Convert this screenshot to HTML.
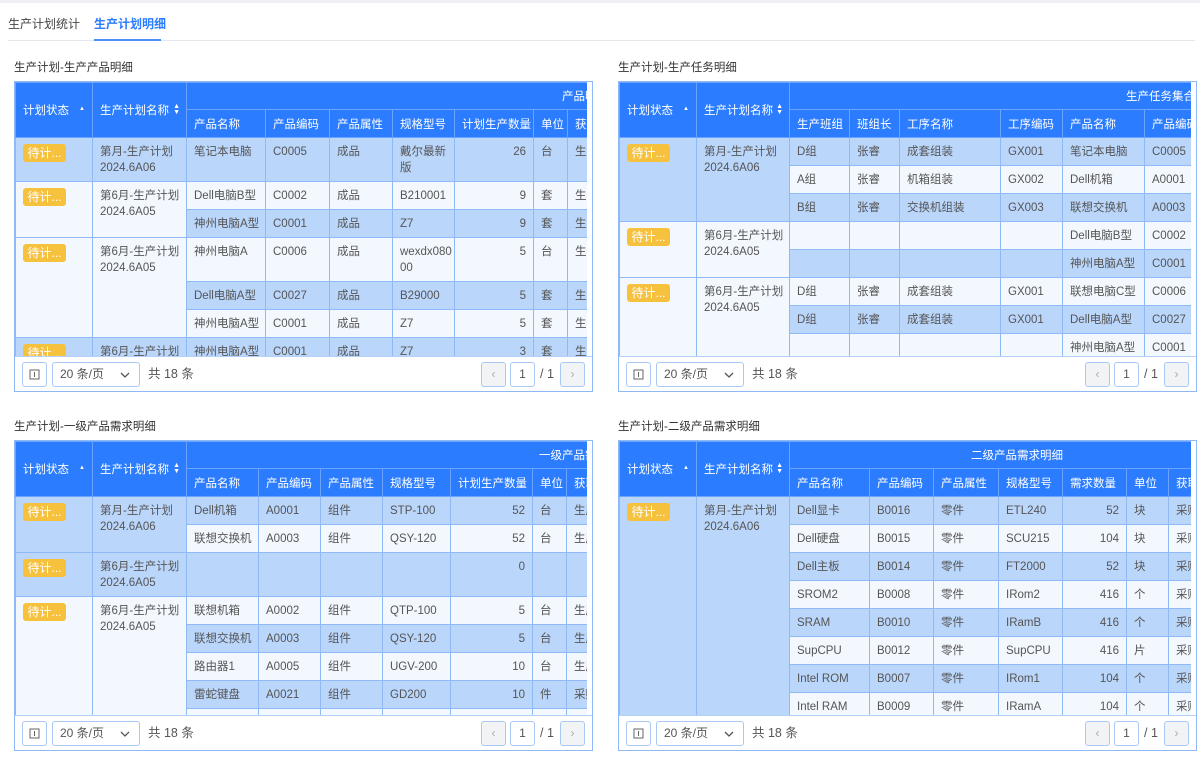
<!DOCTYPE html>
<html><head><meta charset="utf-8"><style>
*{box-sizing:border-box;margin:0;padding:0}
body{width:1200px;height:773px;background:#fff;font-family:"Liberation Sans","Noto Sans CJK SC",sans-serif;position:relative;overflow:hidden;color:#555;font-size:11.5px}
.top{position:absolute;left:0;top:0;width:1200px;height:3px;background:#eef0f4}
.tab{position:absolute;top:15px;font-size:12px;color:#444}
.tab.a{color:#2b7cff;font-weight:bold}
.tline{position:absolute;left:8px;top:40px;width:1187px;height:1px;background:#e4e7ec}
.tul{position:absolute;left:94px;top:39px;width:67px;height:2px;background:#4b8ff7}
.ttl{position:absolute;font-size:11.5px;color:#333}
.panel{position:absolute;width:579px;height:311px;border:1px solid #8fb9f5;background:#fff}
.clip{position:absolute;left:0;top:0;width:572px;height:275px;overflow:hidden;background:#f3f8fe}
.foot{position:absolute;left:0;top:274px;width:577px;height:35px;border-top:1px solid #b5d1f9;background:#fff}
table{border-collapse:collapse;table-layout:fixed}
th{background:#2b7cff;color:#fff;font-weight:normal;text-align:left;padding:0 7px;border:1px solid #6aa4ff;white-space:nowrap;overflow:hidden;font-size:11.5px;position:relative;vertical-align:middle}
td{border:1px solid #8fbaf6;vertical-align:top;padding:6px 7px 0 7px;line-height:16px;white-space:nowrap;overflow:hidden;color:#555;font-size:11.5px}
.b{background:#bad6fb}.l{background:#f3f8fe}
.r{text-align:right}
.bd{display:inline-block;background:#f6c23e;color:#fff;border-radius:3px;width:43px;height:18px;line-height:18px;font-size:12px;text-align:center}
.s1{position:absolute;right:7px;top:50%;margin-top:-6px;font-size:6px;line-height:10px}
.s2{position:absolute;right:6px;top:50%;margin-top:-6px;font-size:7px;line-height:6px;text-align:center}
.ib{position:absolute;top:5px;height:25px;border:1px solid #a9c8f5;border-radius:3px;background:#fff;text-align:center;line-height:23px;color:#555;font-size:12px}
.g{background:#f2f3f5;color:#aaa}
.ft{position:absolute;top:5px;line-height:25px;color:#555;font-size:12.5px}
</style></head><body>
<div class="top"></div>
<div class="tab" style="left:8px">生产计划统计</div>
<div class="tab a" style="left:94px">生产计划明细</div>
<div class="tline"></div><div class="tul"></div>

<div class="ttl" style="left:14px;top:59px">生产计划-生产产品明细</div>
<div class="ttl" style="left:618px;top:59px">生产计划-生产任务明细</div>
<div class="ttl" style="left:14px;top:418px">生产计划-一级产品需求明细</div>
<div class="ttl" style="left:618px;top:418px">生产计划-二级产品需求明细</div>

<!-- Panel 1 -->
<div class="panel" style="left:14px;top:81px"><div class="clip">
<table style="width:612px">
<colgroup><col style="width:77px"><col style="width:94px"><col style="width:79px"><col style="width:64px"><col style="width:63px"><col style="width:62px"><col style="width:79px"><col style="width:34px"><col style="width:60px"></colgroup>
<tr style="height:27px"><th rowspan="2">计划状态<span class="s1">▲</span></th><th rowspan="2">生产计划名称<span class="s2">▲<br>▼</span></th><th colspan="7" style="padding-left:375px">产品明细</th></tr>
<tr style="height:28px"><th>产品名称</th><th>产品编码</th><th>产品属性</th><th>规格型号</th><th>计划生产数量</th><th>单位</th><th>获取方式</th></tr>
<tr style="height:44px"><td class="b"><span class="bd">待计...</span></td><td class="b">第月-生产计划<br>2024.6A06</td><td class="b">笔记本电脑</td><td class="b">C0005</td><td class="b">成品</td><td class="b">戴尔最新<br>版</td><td class="b r">26</td><td class="b">台</td><td class="b">生产</td></tr>
<tr style="height:28px"><td class="l" rowspan="2"><span class="bd">待计...</span></td><td class="l" rowspan="2">第6月-生产计划<br>2024.6A05</td><td class="l">Dell电脑B型</td><td class="l">C0002</td><td class="l">成品</td><td class="l">B210001</td><td class="l r">9</td><td class="l">套</td><td class="l">生产</td></tr>
<tr style="height:28px"><td class="b">神州电脑A型</td><td class="b">C0001</td><td class="b">成品</td><td class="b">Z7</td><td class="b r">9</td><td class="b">套</td><td class="b">生产</td></tr>
<tr style="height:44px"><td class="l" rowspan="3"><span class="bd">待计...</span></td><td class="l" rowspan="3">第6月-生产计划<br>2024.6A05</td><td class="l">神州电脑A</td><td class="l">C0006</td><td class="l">成品</td><td class="l">wexdx080<br>00</td><td class="l r">5</td><td class="l">台</td><td class="l">生产</td></tr>
<tr style="height:28px"><td class="b">Dell电脑A型</td><td class="b">C0027</td><td class="b">成品</td><td class="b">B29000</td><td class="b r">5</td><td class="b">套</td><td class="b">生产</td></tr>
<tr style="height:28px"><td class="l">神州电脑A型</td><td class="l">C0001</td><td class="l">成品</td><td class="l">Z7</td><td class="l r">5</td><td class="l">套</td><td class="l">生产</td></tr>
<tr style="height:28px"><td class="b"><span class="bd">待计...</span></td><td class="b">第6月-生产计划</td><td class="b">神州电脑A型</td><td class="b">C0001</td><td class="b">成品</td><td class="b">Z7</td><td class="b r">3</td><td class="b">套</td><td class="b">生产</td></tr>
</table></div>
<div class="foot">
<div class="ib" style="left:7px;width:25px"><svg width="11" height="11" viewBox="0 0 11 11" style="margin-top:6px"><rect x="1" y="1" width="9" height="9" fill="none" stroke="#666"/><line x1="5.5" y1="3" x2="5.5" y2="8" stroke="#666"/></svg></div>
<div class="ib" style="left:37px;width:88px;text-align:left;padding-left:7px">20 条/页<svg style="position:absolute;right:9px;top:9px" width="10" height="6" viewBox="0 0 10 6"><path d="M1 1L5 5L9 1" fill="none" stroke="#555" stroke-width="1.3"/></svg></div>
<div class="ft" style="left:133px">共 18 条</div>
<div class="ib g" style="left:466px;width:25px">‹</div>
<div class="ib" style="left:495px;width:25px">1</div>
<div class="ft" style="left:525px">/ 1</div>
<div class="ib g" style="left:545px;width:25px">›</div>
</div></div>

<!-- Panel 2 -->
<div class="panel" style="left:618px;top:81px"><div class="clip">
<table style="width:585px">
<colgroup><col style="width:77px"><col style="width:93px"><col style="width:60px"><col style="width:50px"><col style="width:101px"><col style="width:62px"><col style="width:82px"><col style="width:60px"></colgroup>
<tr style="height:27px"><th rowspan="2">计划状态<span class="s1">▲</span></th><th rowspan="2">生产计划名称<span class="s2">▲<br>▼</span></th><th colspan="6" style="padding-left:336px">生产任务集合</th></tr>
<tr style="height:28px"><th>生产班组</th><th>班组长</th><th>工序名称</th><th>工序编码</th><th>产品名称</th><th>产品编码</th></tr>
<tr style="height:28px"><td class="b" rowspan="3"><span class="bd">待计...</span></td><td class="b" rowspan="3">第月-生产计划<br>2024.6A06</td><td class="b">D组</td><td class="b">张睿</td><td class="b">成套组装</td><td class="b">GX001</td><td class="b">笔记本电脑</td><td class="b">C0005</td></tr>
<tr style="height:28px"><td class="l">A组</td><td class="l">张睿</td><td class="l">机箱组装</td><td class="l">GX002</td><td class="l">Dell机箱</td><td class="l">A0001</td></tr>
<tr style="height:28px"><td class="b">B组</td><td class="b">张睿</td><td class="b">交换机组装</td><td class="b">GX003</td><td class="b">联想交换机</td><td class="b">A0003</td></tr>
<tr style="height:28px"><td class="l" rowspan="2"><span class="bd">待计...</span></td><td class="l" rowspan="2">第6月-生产计划<br>2024.6A05</td><td class="l"></td><td class="l"></td><td class="l"></td><td class="l"></td><td class="l">Dell电脑B型</td><td class="l">C0002</td></tr>
<tr style="height:28px"><td class="b"></td><td class="b"></td><td class="b"></td><td class="b"></td><td class="b">神州电脑A型</td><td class="b">C0001</td></tr>
<tr style="height:28px"><td class="l" rowspan="3"><span class="bd">待计...</span></td><td class="l" rowspan="3">第6月-生产计划<br>2024.6A05</td><td class="l">D组</td><td class="l">张睿</td><td class="l">成套组装</td><td class="l">GX001</td><td class="l">联想电脑C型</td><td class="l">C0006</td></tr>
<tr style="height:28px"><td class="b">D组</td><td class="b">张睿</td><td class="b">成套组装</td><td class="b">GX001</td><td class="b">Dell电脑A型</td><td class="b">C0027</td></tr>
<tr style="height:28px"><td class="l"></td><td class="l"></td><td class="l"></td><td class="l"></td><td class="l">神州电脑A型</td><td class="l">C0001</td></tr>
</table></div>
<div class="foot">
<div class="ib" style="left:7px;width:25px"><svg width="11" height="11" viewBox="0 0 11 11" style="margin-top:6px"><rect x="1" y="1" width="9" height="9" fill="none" stroke="#666"/><line x1="5.5" y1="3" x2="5.5" y2="8" stroke="#666"/></svg></div>
<div class="ib" style="left:37px;width:88px;text-align:left;padding-left:7px">20 条/页<svg style="position:absolute;right:9px;top:9px" width="10" height="6" viewBox="0 0 10 6"><path d="M1 1L5 5L9 1" fill="none" stroke="#555" stroke-width="1.3"/></svg></div>
<div class="ft" style="left:133px">共 18 条</div>
<div class="ib g" style="left:466px;width:25px">‹</div>
<div class="ib" style="left:495px;width:25px">1</div>
<div class="ft" style="left:525px">/ 1</div>
<div class="ib g" style="left:545px;width:25px">›</div>
</div></div>

<!-- Panel 3 -->
<div class="panel" style="left:14px;top:440px"><div class="clip">
<table style="width:611px">
<colgroup><col style="width:77px"><col style="width:94px"><col style="width:72px"><col style="width:62px"><col style="width:62px"><col style="width:68px"><col style="width:82px"><col style="width:34px"><col style="width:60px"></colgroup>
<tr style="height:27px"><th rowspan="2">计划状态<span class="s1">▲</span></th><th rowspan="2">生产计划名称<span class="s2">▲<br>▼</span></th><th colspan="7" style="padding-left:352px">一级产品需求明细</th></tr>
<tr style="height:28px"><th>产品名称</th><th>产品编码</th><th>产品属性</th><th>规格型号</th><th>计划生产数量</th><th>单位</th><th>获取方式</th></tr>
<tr style="height:28px"><td class="b" rowspan="2"><span class="bd">待计...</span></td><td class="b" rowspan="2">第月-生产计划<br>2024.6A06</td><td class="b">Dell机箱</td><td class="b">A0001</td><td class="b">组件</td><td class="b">STP-100</td><td class="b r">52</td><td class="b">台</td><td class="b">生产</td></tr>
<tr style="height:28px"><td class="l">联想交换机</td><td class="l">A0003</td><td class="l">组件</td><td class="l">QSY-120</td><td class="l r">52</td><td class="l">台</td><td class="l">生产</td></tr>
<tr style="height:44px"><td class="b"><span class="bd">待计...</span></td><td class="b">第6月-生产计划<br>2024.6A05</td><td class="b"></td><td class="b"></td><td class="b"></td><td class="b"></td><td class="b r">0</td><td class="b"></td><td class="b"></td></tr>
<tr style="height:28px"><td class="l" rowspan="5"><span class="bd">待计...</span></td><td class="l" rowspan="5">第6月-生产计划<br>2024.6A05</td><td class="l">联想机箱</td><td class="l">A0002</td><td class="l">组件</td><td class="l">QTP-100</td><td class="l r">5</td><td class="l">台</td><td class="l">生产</td></tr>
<tr style="height:28px"><td class="b">联想交换机</td><td class="b">A0003</td><td class="b">组件</td><td class="b">QSY-120</td><td class="b r">5</td><td class="b">台</td><td class="b">生产</td></tr>
<tr style="height:28px"><td class="l">路由器1</td><td class="l">A0005</td><td class="l">组件</td><td class="l">UGV-200</td><td class="l r">10</td><td class="l">台</td><td class="l">生产</td></tr>
<tr style="height:28px"><td class="b">雷蛇键盘</td><td class="b">A0021</td><td class="b">组件</td><td class="b">GD200</td><td class="b r">10</td><td class="b">件</td><td class="b">采购</td></tr>
<tr style="height:28px"><td class="l"></td><td class="l"></td><td class="l"></td><td class="l"></td><td class="l"></td><td class="l"></td><td class="l"></td></tr>
</table></div>
<div class="foot">
<div class="ib" style="left:7px;width:25px"><svg width="11" height="11" viewBox="0 0 11 11" style="margin-top:6px"><rect x="1" y="1" width="9" height="9" fill="none" stroke="#666"/><line x1="5.5" y1="3" x2="5.5" y2="8" stroke="#666"/></svg></div>
<div class="ib" style="left:37px;width:88px;text-align:left;padding-left:7px">20 条/页<svg style="position:absolute;right:9px;top:9px" width="10" height="6" viewBox="0 0 10 6"><path d="M1 1L5 5L9 1" fill="none" stroke="#555" stroke-width="1.3"/></svg></div>
<div class="ft" style="left:133px">共 18 条</div>
<div class="ib g" style="left:466px;width:25px">‹</div>
<div class="ib" style="left:495px;width:25px">1</div>
<div class="ft" style="left:525px">/ 1</div>
<div class="ib g" style="left:545px;width:25px">›</div>
</div></div>

<!-- Panel 4 -->
<div class="panel" style="left:618px;top:440px"><div class="clip">
<table style="width:609px">
<colgroup><col style="width:77px"><col style="width:93px"><col style="width:80px"><col style="width:64px"><col style="width:65px"><col style="width:64px"><col style="width:64px"><col style="width:42px"><col style="width:60px"></colgroup>
<tr style="height:27px"><th rowspan="2">计划状态<span class="s1">▲</span></th><th rowspan="2">生产计划名称<span class="s2">▲<br>▼</span></th><th colspan="7" style="padding-left:181px">二级产品需求明细</th></tr>
<tr style="height:28px"><th>产品名称</th><th>产品编码</th><th>产品属性</th><th>规格型号</th><th>需求数量</th><th>单位</th><th>获取方式</th></tr>
<tr style="height:28px"><td class="b" rowspan="8"><span class="bd">待计...</span></td><td class="b" rowspan="8">第月-生产计划<br>2024.6A06</td><td class="b">Dell显卡</td><td class="b">B0016</td><td class="b">零件</td><td class="b">ETL240</td><td class="b r">52</td><td class="b">块</td><td class="b">采购</td></tr>
<tr style="height:28px"><td class="l">Dell硬盘</td><td class="l">B0015</td><td class="l">零件</td><td class="l">SCU215</td><td class="l r">104</td><td class="l">块</td><td class="l">采购</td></tr>
<tr style="height:28px"><td class="b">Dell主板</td><td class="b">B0014</td><td class="b">零件</td><td class="b">FT2000</td><td class="b r">52</td><td class="b">块</td><td class="b">采购</td></tr>
<tr style="height:28px"><td class="l">SROM2</td><td class="l">B0008</td><td class="l">零件</td><td class="l">IRom2</td><td class="l r">416</td><td class="l">个</td><td class="l">采购</td></tr>
<tr style="height:28px"><td class="b">SRAM</td><td class="b">B0010</td><td class="b">零件</td><td class="b">IRamB</td><td class="b r">416</td><td class="b">个</td><td class="b">采购</td></tr>
<tr style="height:28px"><td class="l">SupCPU</td><td class="l">B0012</td><td class="l">零件</td><td class="l">SupCPU</td><td class="l r">416</td><td class="l">片</td><td class="l">采购</td></tr>
<tr style="height:28px"><td class="b">Intel ROM</td><td class="b">B0007</td><td class="b">零件</td><td class="b">IRom1</td><td class="b r">104</td><td class="b">个</td><td class="b">采购</td></tr>
<tr style="height:28px"><td class="l">Intel RAM</td><td class="l">B0009</td><td class="l">零件</td><td class="l">IRamA</td><td class="l r">104</td><td class="l">个</td><td class="l">采购</td></tr>
</table></div>
<div class="foot">
<div class="ib" style="left:7px;width:25px"><svg width="11" height="11" viewBox="0 0 11 11" style="margin-top:6px"><rect x="1" y="1" width="9" height="9" fill="none" stroke="#666"/><line x1="5.5" y1="3" x2="5.5" y2="8" stroke="#666"/></svg></div>
<div class="ib" style="left:37px;width:88px;text-align:left;padding-left:7px">20 条/页<svg style="position:absolute;right:9px;top:9px" width="10" height="6" viewBox="0 0 10 6"><path d="M1 1L5 5L9 1" fill="none" stroke="#555" stroke-width="1.3"/></svg></div>
<div class="ft" style="left:133px">共 18 条</div>
<div class="ib g" style="left:466px;width:25px">‹</div>
<div class="ib" style="left:495px;width:25px">1</div>
<div class="ft" style="left:525px">/ 1</div>
<div class="ib g" style="left:545px;width:25px">›</div>
</div></div>
</body></html>
